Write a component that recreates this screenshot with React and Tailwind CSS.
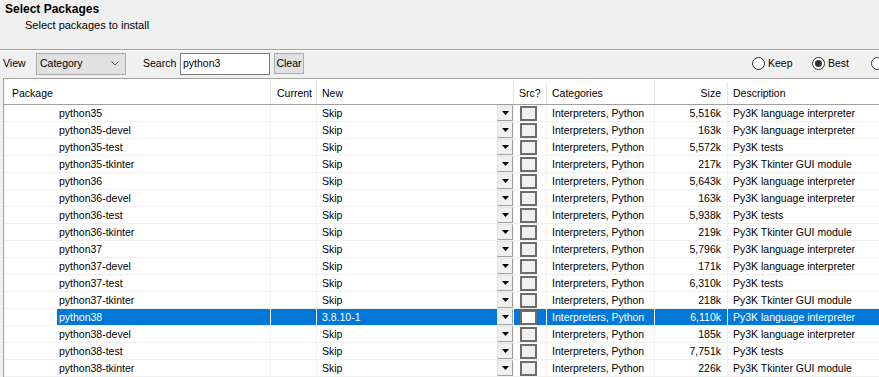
import React from 'react';

const packages = [
  { name: 'python35', size: '5,516k', desc: 'Py3K language interpreter' },
  { name: 'python35-devel', size: '163k', desc: 'Py3K language interpreter' },
  { name: 'python35-test', size: '5,572k', desc: 'Py3K tests' },
  { name: 'python35-tkinter', size: '217k', desc: 'Py3K Tkinter GUI module' },
  { name: 'python36', size: '5,643k', desc: 'Py3K language interpreter' },
  { name: 'python36-devel', size: '163k', desc: 'Py3K language interpreter' },
  { name: 'python36-test', size: '5,938k', desc: 'Py3K tests' },
  { name: 'python36-tkinter', size: '219k', desc: 'Py3K Tkinter GUI module' },
  { name: 'python37', size: '5,796k', desc: 'Py3K language interpreter' },
  { name: 'python37-devel', size: '171k', desc: 'Py3K language interpreter' },
  { name: 'python37-test', size: '6,310k', desc: 'Py3K tests' },
  { name: 'python37-tkinter', size: '218k', desc: 'Py3K Tkinter GUI module' },
  { name: 'python38', size: '6,110k', desc: 'Py3K language interpreter', next: '3.8.10-1', selected: true },
  { name: 'python38-devel', size: '185k', desc: 'Py3K language interpreter' },
  { name: 'python38-test', size: '7,751k', desc: 'Py3K tests' },
  { name: 'python38-tkinter', size: '226k', desc: 'Py3K Tkinter GUI module' },
];

const cols = 'grid grid-cols-[267px_46px_197px_33px_108px_73px_1fr]';

function DropButton() {
  return (
    <div className="w-[16px] h-[16px] shrink-0 flex items-center justify-center bg-[#f0f0f0] border-t border-l border-[#e3e3e3] border-r border-b border-r-[#a0a0a0] border-b-[#a0a0a0]">
      <svg width="7" height="4" viewBox="0 0 7 4">
        <path d="M0 0h7L3.5 4z" fill="#000" />
      </svg>
    </div>
  );
}

function Radio({ label, checked, width }) {
  return (
    <div className={`flex items-center shrink-0 ${width}`}>
      <div className="w-[13px] h-[13px] rounded-full border border-[#333] bg-white flex items-center justify-center shrink-0">
        {checked && <div className="w-[7px] h-[7px] rounded-full bg-[#333]" />}
      </div>
      {label && <span className="ml-[3px]">{label}</span>}
    </div>
  );
}

function PackageRow({ pkg }) {
  const sel = pkg.selected;
  const line = sel ? 'border-r border-white' : 'border-r border-[#f0f0f0]';
  const fill = sel ? 'bg-[#0078d7] text-white' : '';
  return (
    <div className={`${cols} h-[17px] border-b border-[#f0f0f0]`}>
      <div className={`flex ${line}`}>
        <div className={`ml-[53px] pl-[2px] flex-1 flex items-center ${fill}`}>{pkg.name}</div>
      </div>
      <div className={`${line} ${fill}`} />
      <div className={`flex items-center ${line} ${fill}`}>
        <span className="pl-[5px] flex-1">{pkg.next || 'Skip'}</span>
        <DropButton />
      </div>
      <div className={`flex items-center ${line} ${fill}`}>
        <div className={`ml-[6px] w-[17px] h-[15px] border-2 border-[#6d6d6d] ${sel ? 'bg-white' : 'bg-[#f0f0f0]'}`} />
      </div>
      <div className={`flex items-center pl-[5px] whitespace-nowrap ${line} ${fill}`}>Interpreters, Python</div>
      <div className={`flex items-center justify-end pr-[6px] ${line} ${fill}`}>{pkg.size}</div>
      <div className={`flex items-center pl-[5px] whitespace-nowrap ${fill}`}>{pkg.desc}</div>
    </div>
  );
}

export default function App() {
  return (
    <div className="w-[879px] h-[377px] overflow-hidden bg-[#f0f0f0] text-[10.5px] text-black font-['Liberation_Sans',Arial,sans-serif] leading-none">
      <div className="h-[49px] pl-[5px] pt-[3px]">
        <div className="text-[12px] font-bold leading-[13px]">Select Packages</div>
        <div className="pl-[20px] mt-[3px] leading-[13px] text-[11px]">Select packages to install</div>
      </div>
      <div className="h-px bg-[#a0a0a0]" />
      <div className="h-px bg-white" />

      <div className="h-[25px] flex items-center pl-[3px] mb-[2px]">
        <span className="w-[33px] shrink-0">View</span>
        <div className="w-[90px] h-[22px] shrink-0 flex items-center justify-between bg-[#e1e1e1] border border-[#adadad] pl-[3px] pr-[6px]">
          <span>Category</span>
          <svg width="8" height="5" viewBox="0 0 8 5">
            <path d="M0.5 0.5L4 4L7.5 0.5" fill="none" stroke="#555" strokeWidth="1" />
          </svg>
        </div>
        <span className="ml-[17px] w-[37px] shrink-0">Search</span>
        <div className="w-[90px] h-[22px] shrink-0 bg-white border border-[#7a7a7a] pl-[2px] pt-[4px]">python3</div>
        <div className="ml-[4px] w-[30px] h-[21px] shrink-0 flex items-center justify-center bg-[#e1e1e1] border border-[#adadad]">Clear</div>
        <div className="ml-auto w-[127px] flex overflow-hidden">
          <Radio label="Keep" width="w-[60px]" />
          <Radio label="Best" checked width="w-[59px]" />
          <Radio width="w-[13px]" />
        </div>
      </div>

      <div className="ml-[3px] h-[299px] border-l border-t border-[#a0a0a0] bg-white overflow-hidden">
        <div className={`${cols} h-[26px] border-b border-[#a0a0a0] pt-[3px]`}>
          <div className="flex items-center pl-[8px] border-r border-[#e5e5e5]">Package</div>
          <div className="flex items-center pl-[6px] border-r border-[#e5e5e5]">Current</div>
          <div className="flex items-center pl-[5px] border-r border-[#e5e5e5]">New</div>
          <div className="flex items-center pl-[5px] border-r border-[#e5e5e5]">Src?</div>
          <div className="flex items-center pl-[5px] border-r border-[#e5e5e5]">Categories</div>
          <div className="flex items-center justify-end pr-[6px] border-r border-[#e5e5e5]">Size</div>
          <div className="flex items-center pl-[5px]">Description</div>
        </div>
        {packages.map((pkg) => (
          <PackageRow key={pkg.name} pkg={pkg} />
        ))}
      </div>
    </div>
  );
}
